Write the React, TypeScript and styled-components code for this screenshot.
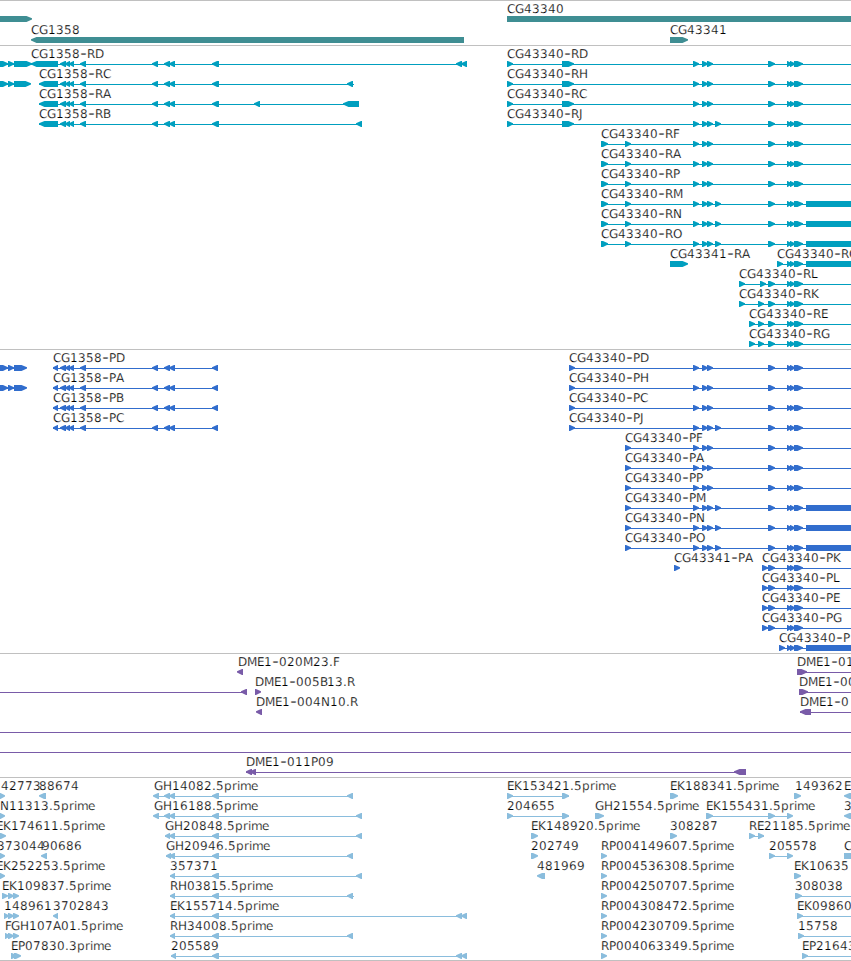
import React from "react";
import styled, { createGlobalStyle } from "styled-components";

const GlobalStyle = createGlobalStyle`
  html, body { margin: 0; padding: 0; background: #fff; overflow: hidden; }
`;

const Viewer = styled.main`
  display: flex;
  flex-direction: column;
  width: 851px;
  height: 960px;
  border-bottom: 1px solid #c0c0c0;
  background: #fff;
  overflow: hidden;
`;

const TrackPanel = styled.section<{ $color: string; $gap: number }>`
  display: flex;
  flex-direction: column;
  flex: none;
  border-top: 1px solid #c0c0c0;
  padding-bottom: ${(p) => p.$gap}px;
  color: ${(p) => p.$color};
`;

const Lane = styled.svg<{ $height: number }>`
  display: block;
  flex: none;
  width: 851px;
  height: ${(p) => p.$height}px;
  overflow: visible;
`;

const Label = styled.text`
  font-family: "DejaVu Sans", sans-serif;
  font-size: 12px;
  fill: #000;
  stroke: #fff;
  stroke-width: 0.22px;
  white-space: pre;
  text-rendering: geometricPrecision;
`;

const Hyphen = styled.tspan`
  font-size: 18px;
`;

const Shape = styled.path`
  fill: currentColor;
`;

type Dir = 1 | -1 | 0;
type Exon = [number, number, Dir?];
interface Feature {
  label?: string;
  at?: number;
  dir: Dir;
  span?: [number, number];
  exons: Exon[];
}

/* Whole-pixel advances keep the labels on the grid of the display. */
const ADVANCE: Record<string, number> = {
  C: 8, G: 9, R: 8, D: 9, H: 9, J: 4, F: 6, A: 8, P: 7, M: 10, N: 9, O: 9, Q: 9,
  L: 6, K: 8, E: 7, B: 7, "-": 7, ".": 4, p: 8, r: 5, i: 3, m: 11, e: 7,
};

const advanceOf = (text: string) =>
  text.split("").reduce((sum, c) => sum + (ADVANCE[c] ?? 8), 0);

const glyphPositions = (text: string, start: number) =>
  text
    .split("")
    .map((_, i) => start + advanceOf(text.slice(0, i)))
    .join(" ");

const exonPath = (a: number, b: number, dir: Dir) => {
  const h = Math.min(b - a > 8 ? 6 : 5.5, b - a);
  if (dir === 1) return `M${a} 15H${b - h + 0.5}L${b} 17.2V18.6L${b - h + 0.5} 21H${a}Z`;
  if (dir === -1) return `M${b} 15H${a + h - 0.5}L${a} 17.2V18.6L${a + h - 0.5} 21H${b}Z`;
  return `M${a} 15H${b}V21H${a}Z`;
};

const FeatureLabel = ({ text, start }: { text: string; start: number }) => {
  const cut = text.indexOf("-");
  if (cut < 0) {
    return <Label x={glyphPositions(text, start)} y={12}>{text}</Label>;
  }
  const head = text.slice(0, cut);
  const tail = text.slice(cut + 1);
  const dash = start + advanceOf(head);
  return (
    <Label y={12}>
      <tspan x={glyphPositions(head, start)}>{head}</tspan>
      <Hyphen x={dash + 0.3} y={13.2}>-</Hyphen>
      <tspan x={glyphPositions(tail, dash + 7)} y={12}>{tail}</tspan>
    </Label>
  );
};

const FeatureGlyph = ({ f }: { f: Feature }) => (
  <g>
    {f.span && <Shape d={`M${f.span[0]} 18H${f.span[1]}V19H${f.span[0]}Z`} />}
    {f.exons.map(([a, b, d], i) => (
      <Shape key={i} d={exonPath(a, b, d ?? f.dir)} />
    ))}
    {f.label && <FeatureLabel text={f.label} start={f.at ?? f.exons[0][0]} />}
  </g>
);

const fwd = (label: string, at: number, exons: Exon[], span?: [number, number]): Feature => ({
  label, at, exons, span, dir: 1,
});
const rev = (label: string, at: number, exons: Exon[], span?: [number, number]): Feature => ({
  label, at, exons, span, dir: -1,
});

const END = 851;

const upstream = (end: number): Feature => ({
  dir: 1, span: [0, end - 1], exons: [[0, 8], [8, 14], [14, end]],
});

const revCore: Exon[] = [[60, 66], [65, 70], [69, 74], [80, 86], [152, 158], [164, 170], [169, 175]];
const revTail: Exon = [212, 219];
const rnaRev = (name: string, start: number, end: number, tail: Exon[]) =>
  rev(`CG1358-${name}`, start, [[start, 58], ...revCore, revTail, ...tail], [start, end]);
const cdsRev = (name: string) =>
  rev(`CG1358-${name}`, 53, [[53, 58], ...revCore, [212, 218]], [53, 218]);

const cluster: Exon[] = [[787, 792], [790, 795], [794, 803]];
const inner: Exon[] = [[693, 699], [702, 708], [707, 713]];
const extra: Exon = [715, 721];
const mid: Exon = [768, 775];
const block: Exon = [806, 860, 0];
const tx = (name: string, start: number, exons: Exon[]) =>
  fwd(`CG43340-${name}`, start, [...exons, ...cluster], [start, END]);

const starts: Exon[] = [[507, 513], [562, 574]];
const starts2: Exon[] = [[601, 608], [625, 631]];
const cdsA: Exon[] = [[569, 575]];
const cdsB: Exon[] = [[625, 631]];

const genes: Feature[][] = [
  [{ dir: 1, exons: [[0, 32]] }, fwd("CG43340", 507, [[507, 860, 0]])],
  [rev("CG1358", 31, [[31, 464]]), fwd("CG43341", 670, [[670, 688]])],
];

const transcripts: Feature[][] = [
  [upstream(32), rnaRev("RD", 31, 467, [[456, 462], [461, 467]]), tx("RD", 507, [...starts, ...inner, mid])],
  [upstream(31), rnaRev("RC", 39, 354, [[347, 353]]), tx("RH", 507, [...starts, ...inner, mid])],
  [rnaRev("RA", 39, 359, [[254, 260], [343, 359]]), tx("RC", 507, [...starts, ...inner, mid])],
  [rnaRev("RB", 39, 362, [[356, 362]]), tx("RJ", 507, [...starts, ...inner, extra, mid])],
  [tx("RF", 601, [...starts2, ...inner, mid])],
  [tx("RA", 601, [...starts2, ...inner, mid])],
  [tx("RP", 601, [...starts2, ...inner, mid])],
  [tx("RM", 601, [...starts2, ...inner, extra, mid, block])],
  [tx("RN", 601, [...starts2, ...inner, extra, mid, block])],
  [tx("RO", 601, [...starts2, ...inner, extra, mid, block])],
  [fwd("CG43341-RA", 670, [[670, 688]]), tx("RQ", 777, [[777, 783], block])],
  [tx("RL", 739, [[739, 745], [760, 766], mid])],
  [tx("RK", 739, [[739, 745], [758, 764], mid])],
  [tx("RE", 749, [[749, 755], [758, 764], mid])],
  [tx("RG", 749, [[749, 755], [758, 764], mid])],
];

const coding: Feature[][] = [
  [upstream(27), cdsRev("PD"), tx("PD", 569, [...cdsA, ...inner, mid])],
  [upstream(27), cdsRev("PA"), tx("PH", 569, [...cdsA, ...inner, mid])],
  [cdsRev("PB"), tx("PC", 569, [...cdsA, ...inner, mid])],
  [cdsRev("PC"), tx("PJ", 569, [...cdsA, ...inner, extra, mid])],
  [tx("PF", 625, [...cdsB, ...inner, mid])],
  [tx("PA", 625, [...cdsB, ...inner, mid])],
  [tx("PP", 625, [...cdsB, ...inner, mid])],
  [tx("PM", 625, [...cdsB, ...inner, extra, mid, block])],
  [tx("PN", 625, [...cdsB, ...inner, extra, mid, block])],
  [tx("PO", 625, [...cdsB, ...inner, extra, mid, block])],
  [fwd("CG43341-PA", 674, [[674, 680]]), tx("PK", 762, [[762, 768], mid])],
  [tx("PL", 762, [[762, 768], mid])],
  [tx("PE", 762, [[762, 768], mid])],
  [tx("PG", 762, [[762, 768], mid])],
  [tx("P", 779, [[779, 785], block])],
];

const clones: Feature[][] = [
  [rev("DME1-020M23.F", 238, [[237, 243]]), fwd("DME1-01", 797, [[797, 807]], [797, END])],
  [
    { dir: -1, span: [0, 247], exons: [[241, 247]] },
    fwd("DME1-005B13.R", 255, [[255, 261]]),
    fwd("DME1-00", 799, [[799, 808]], [799, END]),
  ],
  [rev("DME1-004N10.R", 256, [[256, 262]]), rev("DME1-0", 800, [[800, 811]], [800, END])],
  [{ dir: 0, span: [0, END], exons: [] }],
  [{ dir: 0, span: [0, END], exons: [] }],
  [rev("DME1-011P09", 246, [[246, 252], [250, 256], [734, 746]], [246, 746])],
];

const e353: Exon[] = [revTail, [347, 353]];
const e362: Exon[] = [revTail, [356, 362]];
const e467: Exon[] = [revTail, [456, 462], [461, 467]];
const rp = (id: string) => fwd(`RP${id}.5prime`, 601, [[601, 607]]);

const ests: Feature[][] = [
  [
    fwd("42773", 1, [[0, 5]]), rev("88674", 39, [[39, 46]]),
    rev("GH14082.5prime", 154, [[153, 159], [164, 170], [169, 175], ...e353], [154, 353]),
    fwd("EK153421.5prime", 507, [[507, 513], [562, 569]], [507, 569]),
    fwd("EK188341.5prime", 670, [[670, 678]]),
    fwd("149362", 795, [[794, 801]]),
    rev("E", 844, [[844, 856]]),
  ],
  [
    fwd("N11313.5prime", 0, [[0, 5]]),
    rev("GH16188.5prime", 154, [[153, 159], [164, 170], [169, 175], ...e362], [154, 362]),
    fwd("204655", 507, [[507, 513], [562, 569]], [507, 569]),
    fwd("GH21554.5prime", 595, [[595, 604]]),
    fwd("EK155431.5prime", 706, [[706, 713], mid, [787, 793]], [706, 792]),
    rev("3", 844, [[844, 856]]),
  ],
  [
    fwd("EK174611.5prime", -4, [[0, 6]]),
    rev("GH20848.5prime", 165, [[165, 170], [169, 175], ...e362], [165, 362]),
    fwd("EK148920.5prime", 531, [[531, 538]]),
    fwd("308287", 670, [[670, 677]]),
    fwd("RE21185.5prime", 749, [[749, 755], [758, 764]], [749, 764]),
  ],
  [
    fwd("373044", -3, [[0, 5]]), rev("90686", 42, [[41, 47]]),
    rev("GH20946.5prime", 166, [[166, 171], [169, 175], ...e353], [166, 353]),
    fwd("202749", 531, [[531, 538]]),
    rp("004149607"),
    fwd("205578", 769, [[769, 775], [787, 793]], [769, 792]),
    fwd("C", 844, [[844, 860, 0]]),
  ],
  [
    fwd("EK252253.5prime", -4, [[0, 5]]),
    rev("357371", 170, [[170, 175], ...e362], [170, 362]),
    rev("481969", 537, [[537, 545]]),
    rp("004536308"),
    fwd("EK10635", 794, [[794, 801]]),
  ],
  [
    fwd("EK109837.5prime", 2, [[2, 8], [8, 14], [13, 19]]),
    rev("RH03815.5prime", 170, [[170, 175], ...e353], [170, 354]),
    rp("004250707"),
    fwd("308038", 795, [[795, 802]], [795, END]),
  ],
  [
    fwd("148961", 4, [[4, 9], [8, 14], [13, 19]]), rev("3702843", 53, [[53, 58]]),
    rev("EK155714.5prime", 170, [[170, 175], ...e467], [170, 467]),
    rp("004308472"),
    fwd("EK09860", 797, [[797, 803]], [797, END]),
  ],
  [
    fwd("FGH107A01.5prime", 5, [[5, 10], [8, 14], [13, 19]]),
    rev("RH34008.5prime", 170, [[170, 175], ...e353], [170, 353]),
    rp("004230709"),
    fwd("15758", 798, [[798, 804]], [798, END]),
  ],
  [
    fwd("EP07830.3prime", 11, [[11, 17], [14, 21]]),
    rev("205589", 171, [[171, 176], ...e467], [171, 467]),
    rp("004063349"),
    fwd("EP21643", 802, [[802, 808]], [802, END]),
  ],
];

interface TrackData { id: string; color: string; rowHeight: number; gap: number; rows: Feature[][] }

const tracks: TrackData[] = [
  { id: "genes", color: "#3f8e93", rowHeight: 21, gap: 2, rows: genes },
  { id: "transcripts", color: "#009fbf", rowHeight: 20, gap: 3, rows: transcripts },
  { id: "coding", color: "#316dcd", rowHeight: 20, gap: 3, rows: coding },
  { id: "clones", color: "#795ba8", rowHeight: 20, gap: 3, rows: clones },
  { id: "ests", color: "#8abddd", rowHeight: 20, gap: 2, rows: ests },
];

const Track = ({ track }: { track: TrackData }) => (
  <TrackPanel $color={track.color} $gap={track.gap}>
    {track.rows.map((row, i) => (
      <Lane key={i} $height={track.rowHeight}>
        {row.map((f, j) => (
          <FeatureGlyph key={j} f={f} />
        ))}
      </Lane>
    ))}
  </TrackPanel>
);

export default function App() {
  return (
    <>
      <GlobalStyle />
      <Viewer>
        {tracks.map((t) => (
          <Track key={t.id} track={t} />
        ))}
      </Viewer>
    </>
  );
}
